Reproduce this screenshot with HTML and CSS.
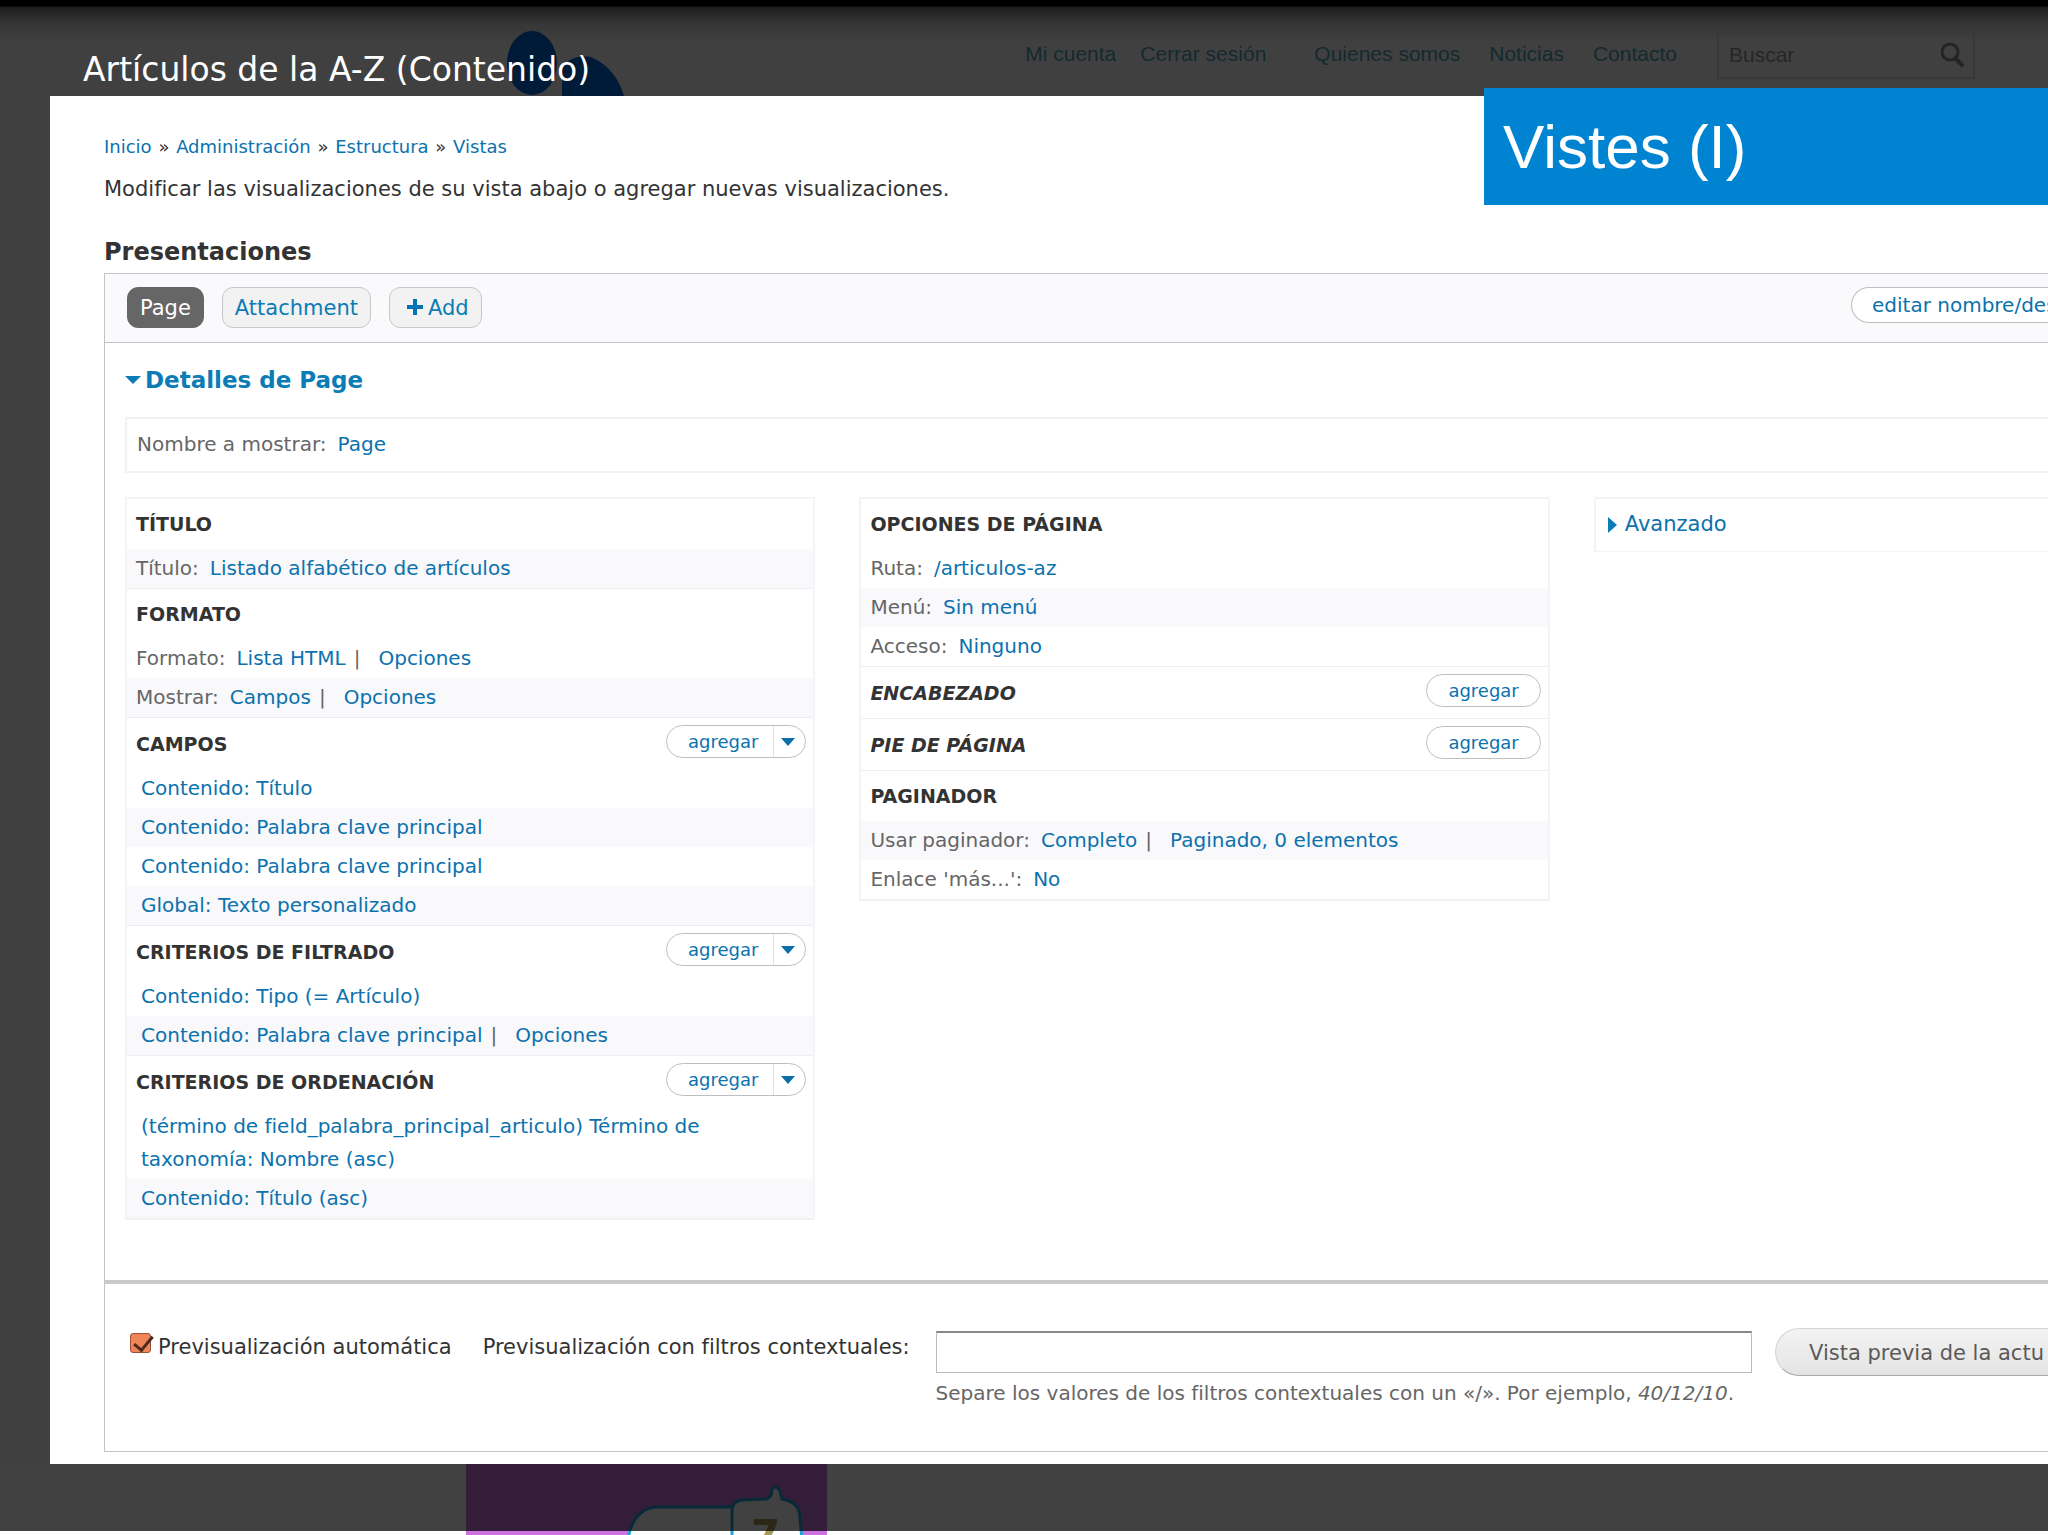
FILE: index.html
```
<!DOCTYPE html>
<html lang="es">
<head>
    <meta charset="UTF-8">
    <meta name="viewport" content="width=device-width, initial-scale=1.0">
    <title>Artículos de la A-Z (Contenido)</title>
    <link rel="stylesheet" href="styles.css">
</head>
<body>
    <header class="top">
        <svg class="logo" width="118" height="65" viewBox="0 0 118 65">
            <ellipse cx="25" cy="32" rx="25" ry="32" fill="#001b38"/>
            <path d="M55 65V40C58 28 70 24 84 26C102 34 112 48 117 65Z" fill="#001b38"/>
        </svg>
        <h1 class="title">Artículos de la A-Z (Contenido)</h1>
        <nav class="site-nav">
            <a href="#">Mi cuenta</a>
            <a href="#" class="last-user">Cerrar sesión</a>
            <a href="#">Quienes somos</a>
            <a href="#">Noticias</a>
            <a href="#">Contacto</a>
        </nav>
        <form class="search">
            <input type="text" placeholder="Buscar" aria-label="Buscar">
            <svg width="24" height="26" viewBox="0 0 24 26" fill="none" stroke="#242425">
                <circle cx="9" cy="10" r="8" stroke-width="3"/>
                <path d="M14 16l8 8" stroke-width="4"/>
            </svg>
        </form>
    </header>

    <div class="banner">Vistes (I)</div>

    <main class="overlay">
        <div class="breadcrumb">
            <a href="#">Inicio</a> <span>»</span> <a href="#">Administración</a> <span>»</span> <a href="#">Estructura</a> <span>»</span> <a href="#">Vistas</a>
        </div>
        <p class="help">Modificar las visualizaciones de su vista abajo o agregar nuevas visualizaciones.</p>
        <h2 class="displays-title">Presentaciones</h2>

        <div class="views">
            <div class="tabs">
                <button type="button" class="tab active">Page</button>
                <button type="button" class="tab">Attachment</button>
                <button type="button" class="tab"><svg width="26" height="16" viewBox="0 0 26 16"><path d="M11 0h4v6h6v4h-6v6h-4v-6H5V6h6z" fill="#0074b4"/></svg>Add</button>
                <button type="button" class="pill edit-button">editar nombre/des</button>
            </div>

            <section class="details">
                <h3 class="details-title"><a href="#"><svg width="16" height="8" viewBox="0 0 16 8"><path d="M0 0h16L8 8z" fill="#0b7cb5"/></svg>Detalles de Page</a></h3>
                <div class="display-name"><span class="label">Nombre a mostrar:</span><a href="#">Page</a></div>

                <div class="columns">
                    <div class="column">
                        <div class="bucket">
                            <h4>Título</h4>
                            <div class="row odd"><span class="label">Título:</span><a href="#">Listado alfabético de artículos</a></div>
                        </div>
                        <div class="bucket">
                            <h4>Formato</h4>
                            <div class="row"><span class="label">Formato:</span><a href="#">Lista HTML</a><span class="sep">|</span><a href="#">Opciones</a></div>
                            <div class="row odd"><span class="label">Mostrar:</span><a href="#">Campos</a><span class="sep">|</span><a href="#">Opciones</a></div>
                        </div>
                        <div class="bucket">
                            <div class="bucket-head">
                                <h4>Campos</h4>
                                <div class="pill split"><button type="button">agregar</button><button type="button" class="toggle" aria-label="Más"><svg width="14" height="8" viewBox="0 0 14 8"><path d="M0 0h14L7 8z" fill="#0b6ea8"/></svg></button></div>
                            </div>
                            <div class="row field"><a href="#">Contenido: Título</a></div>
                            <div class="row field odd"><a href="#">Contenido: Palabra clave principal</a></div>
                            <div class="row field"><a href="#">Contenido: Palabra clave principal</a></div>
                            <div class="row field odd"><a href="#">Global: Texto personalizado</a></div>
                        </div>
                        <div class="bucket">
                            <div class="bucket-head">
                                <h4>Criterios de filtrado</h4>
                                <div class="pill split"><button type="button">agregar</button><button type="button" class="toggle" aria-label="Más"><svg width="14" height="8" viewBox="0 0 14 8"><path d="M0 0h14L7 8z" fill="#0b6ea8"/></svg></button></div>
                            </div>
                            <div class="row field"><a href="#">Contenido: Tipo (= Artículo)</a></div>
                            <div class="row field odd"><a href="#">Contenido: Palabra clave principal</a><span class="sep">|</span><a href="#">Opciones</a></div>
                        </div>
                        <div class="bucket">
                            <div class="bucket-head">
                                <h4>Criterios de ordenación</h4>
                                <div class="pill split"><button type="button">agregar</button><button type="button" class="toggle" aria-label="Más"><svg width="14" height="8" viewBox="0 0 14 8"><path d="M0 0h14L7 8z" fill="#0b6ea8"/></svg></button></div>
                            </div>
                            <div class="row field long"><a href="#">(término de field_palabra_principal_articulo) Término de taxonomía: Nombre (asc)</a></div>
                            <div class="row field odd"><a href="#">Contenido: Título (asc)</a></div>
                        </div>
                    </div>

                    <div class="column">
                        <div class="bucket">
                            <h4>Opciones de página</h4>
                            <div class="row"><span class="label">Ruta:</span><a href="#">/articulos-az</a></div>
                            <div class="row odd"><span class="label">Menú:</span><a href="#">Sin menú</a></div>
                            <div class="row"><span class="label">Acceso:</span><a href="#">Ninguno</a></div>
                        </div>
                        <div class="bucket">
                            <div class="bucket-head">
                                <h4 class="overridden">Encabezado</h4>
                                <button type="button" class="pill add">agregar</button>
                            </div>
                        </div>
                        <div class="bucket">
                            <div class="bucket-head">
                                <h4 class="overridden">Pie de página</h4>
                                <button type="button" class="pill add">agregar</button>
                            </div>
                        </div>
                        <div class="bucket">
                            <h4>Paginador</h4>
                            <div class="row odd"><span class="label">Usar paginador:</span><a href="#">Completo</a><span class="sep">|</span><a href="#">Paginado, 0 elementos</a></div>
                            <div class="row"><span class="label">Enlace 'más...':</span><a href="#">No</a></div>
                        </div>
                    </div>

                    <div class="column advanced">
                        <a href="#"><svg width="9" height="16" viewBox="0 0 9 16"><path d="M0 0l9 8-9 8z" fill="#0b7cb5"/></svg>Avanzado</a>
                    </div>
                </div>
            </section>

            <form class="preview">
                <input type="checkbox" id="live" class="live" checked>
                <label for="live" class="live-label">Previsualización automática</label>
                <label for="args" class="args-label">Previsualización con filtros contextuales:</label>
                <div class="args">
                    <input type="text" id="args">
                    <p>Separe los valores de los filtros contextuales con un «/». Por ejemplo, <em>40/12/10</em>.</p>
                </div>
                <button type="button" class="submit">Vista previa de la actu</button>
            </form>
        </div>
    </main>

    <footer class="behind">
        <svg width="361" height="72" viewBox="0 0 361 72">
            <rect width="361" height="72" fill="#cd71e0"/>
            <g fill="#fff" stroke="#1ba6d6" stroke-width="3">
                <path d="M162 76C164 58 174 44 190 43H268V76Z"/>
                <path d="M266 76V48Q266 37 276 36L300 35Q306 34 306 25Q310 20 314 27L316 35Q334 38 334 54L336 76Z"/>
            </g>
            <text x="285" y="86" class="seven">7</text>
        </svg>
        <div class="shade"></div>
    </footer>
</body>
</html>
```
FILE: styles.css
```
* {
    box-sizing: border-box;
}

body {
    margin: 0;
    background: #fff;
    color: #333;
    font-family: "DejaVu Sans", Verdana, sans-serif;
    font-size: 20px;
    line-height: 33px;
    position: relative;
    overflow: hidden;
}

h1, h2, h3, h4, p {
    margin: 0;
}

a {
    color: #0b72ae;
    text-decoration: none;
}

button, input {
    font-family: inherit;
    margin: 0;
}

button {
    cursor: pointer;
    white-space: nowrap;
}

/* dark bar behind the overlay */
.top {
    height: 96px;
    display: flex;
    align-items: flex-start;
    padding: 0 73px 0 83px;
    background: linear-gradient(#000 0, #000 6px, #1c1c1c 7px, #363636 24px, #404041 42px);
    position: relative;
}

.logo {
    position: absolute;
    left: 507px;
    bottom: 0;
}

.title {
    position: relative;
    margin-top: 50px;
    font-size: 33px;
    font-weight: normal;
    line-height: 40px;
    color: #fff;
}

.site-nav {
    margin-left: auto;
    margin-top: 38px;
    display: flex;
    gap: 29px;
    font: 21px/32px "Liberation Sans", Arial, sans-serif;
}

.site-nav a {
    color: #142a2d;
}

.site-nav a:first-child {
    margin-right: -5px;
}

.site-nav .last-user {
    margin-right: 19px;
}

.search {
    width: 258px;
    height: 48px;
    margin: 31px 0 0 40px;
    padding: 0 8px 0 10px;
    display: flex;
    align-items: center;
    border: 2px solid #38383a;
    border-radius: 3px;
}

.search input {
    flex: 1;
    min-width: 0;
    padding: 0;
    border: 0;
    background: none;
    font: 21px "Liberation Sans", Arial, sans-serif;
}

.search input::placeholder {
    color: #262627;
    opacity: 1;
}

.banner {
    position: absolute;
    top: 88px;
    right: 0;
    width: 564px;
    height: 117px;
    padding-left: 19px;
    background: #0084d1;
    color: #fff;
    font: 62px/117px "Liberation Sans", Arial, sans-serif;
}

/* overlay */
.overlay {
    padding: 36px 0 12px 54px;
    border-left: 50px solid #404041;
    background: #fff;
}

.breadcrumb {
    font-size: 18px;
    line-height: 30px;
}

.breadcrumb span {
    margin: 0 1px;
}

.help {
    margin-top: 11px;
    font-size: 21px;
    line-height: 32px;
}

.displays-title {
    margin: 31px 0 5px;
    font-size: 24px;
    line-height: 32px;
}

.views {
    border: 1px solid #c3c2c6;
    border-right: 0;
}

.tabs {
    display: flex;
    gap: 18px;
    padding: 13px 0 14px 22px;
    background: #faf9fc;
    border-bottom: 1px solid #c3c2c6;
}

.tab {
    height: 41px;
    padding: 1px 12px 0;
    border: 1px solid #c8c8c8;
    border-radius: 11px;
    background: #f2f2f2;
    color: #0b7cb5;
    font-size: 21px;
    line-height: 38px;
}

.tab.active {
    background: #666;
    border-color: #666;
    color: #fff;
}

.pill {
    height: 33px;
    border: 1px solid #bfbfbf;
    border-radius: 17px;
    background: #fff;
    color: #0b72ae;
    font-size: 18px;
}

/* runs up to the window's edge */
.edit-button {
    width: 197px;
    height: 36px;
    margin-left: auto;
    padding: 0 0 0 20px;
    border-right: 0;
    border-radius: 18px 0 0 18px;
    font-size: 20px;
    text-align: left;
    overflow: hidden;
}

.details {
    padding: 21px 0 60px 20px;
}

.details-title {
    margin-bottom: 21px;
    font-size: 23px;
    line-height: 32px;
}

.details-title a {
    display: flex;
    align-items: center;
    gap: 4px;
    color: #0b7cb5;
}

.display-name {
    display: flex;
    padding: 9px 11px 10px 10px;
    border: 2px solid #f2f1f5;
    border-right: 0;
}

.label {
    margin-right: 11px;
    color: #666;
}

.sep {
    margin: 0 18px 0 8px;
    color: #666;
}

.columns {
    display: grid;
    grid-template-columns: 38fr 38fr 25fr;
    gap: 44px;
    align-items: start;
    margin-top: 24px;
}

.column {
    border: 2px solid #f4f3f7;
    border-bottom-width: 1px;
}

.bucket {
    border-bottom: 1px solid #eeedf1;
}

.bucket h4 {
    padding-left: 9px;
    font-size: 19px;
    line-height: 50px;
    text-transform: uppercase;
}

.bucket .overridden {
    font-style: italic;
}

.bucket-head {
    display: flex;
    justify-content: space-between;
    padding: 1px 7px 0 0;
}

.bucket-head .pill {
    margin-top: 6px;
}

.row {
    display: flex;
    padding: 3px 9px;
}

.odd {
    background: #f9f8fb;
}

.field {
    padding-left: 14px;
}

.long {
    padding-right: 90px;
}

.add {
    padding: 0 21px;
}

.split {
    display: flex;
}

.split button {
    padding: 0 15px 0 21px;
    border: 0;
    background: none;
    color: inherit;
    font-size: inherit;
}

.split .toggle {
    display: flex;
    align-items: center;
    padding: 0 10px 0 7px;
    border-left: 1px solid #e2e2e4;
}

.advanced {
    border-right: 0;
    padding: 9px 12px 10px;
    font-size: 21px;
}

.advanced a {
    display: flex;
    align-items: center;
    gap: 8px;
}

/* preview form */
.preview {
    display: flex;
    align-items: flex-start;
    padding: 47px 0 44px 25px;
    border-top: 4px solid #c9c8cb;
    font-size: 21px;
    line-height: 32px;
}

.live {
    appearance: none;
    width: 21px;
    height: 20px;
    margin: 2px 7px 0 0;
    flex: none;
    position: relative;
    border: 1px solid #9a5138;
    border-radius: 3px;
    background: #ef8456;
}

.live:checked::after {
    content: "";
    position: absolute;
    left: 7px;
    top: -2px;
    width: 8px;
    height: 16px;
    border: solid #4b2a20;
    border-width: 0 3px 3px 0;
    transform: rotate(40deg);
}

.live-label {
    margin-right: 31px;
}

.live-label, .args-label {
    white-space: nowrap;
}

.args {
    flex: 1;
    margin: 0 23px 0 26px;
}

.args input {
    display: block;
    width: 100%;
    height: 42px;
    padding: 0 8px;
    border: 1px solid #bbb;
    border-top: 2px solid #88868a;
    background: #fff;
    font-size: 21px;
}

.args p {
    margin-top: 6px;
    color: #666;
    font-size: 20px;
    line-height: 28px;
}

.submit {
    width: 273px;
    height: 48px;
    margin: -3px 0;
    padding: 2px 0 0 33px;
    border: 1px solid #d4d4d4;
    border-bottom-color: #a8a8a8;
    border-right: 0;
    border-radius: 24px 0 0 24px;
    background: linear-gradient(#f3f3f3, #e4e4e4);
    color: #5a5a5a;
    font-size: 21px;
    text-align: left;
    overflow: hidden;
}

/* page that shows under the overlay */
.behind {
    position: relative;
    height: 72px;
    padding-left: 466px;
}

.behind svg {
    display: block;
}

.seven {
    fill: #a39a5c;
    font: bold 42px "DejaVu Sans", sans-serif;
}

.shade {
    position: absolute;
    top: 0;
    left: 0;
    right: 0;
    height: 67px;
    background: rgba(0, 0, 0, 0.745);
}
```
